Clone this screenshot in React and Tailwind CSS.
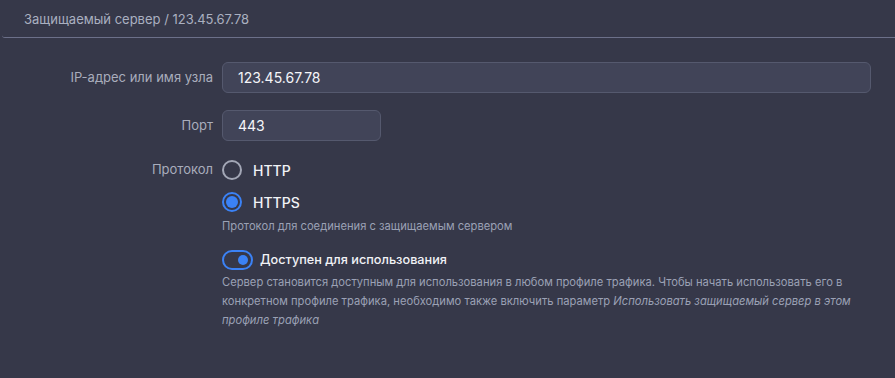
import { useState } from "react";

function Radio({ checked, label, onClick }) {
  return (
    <button type="button" onClick={onClick} className="flex items-center gap-[11px] h-[20px]">
      <span
        className={
          "w-[20px] h-[20px] rounded-full border-2 flex items-center justify-center " +
          (checked ? "border-[#3b82f6]" : "border-[#a3a7b6]")
        }
      >
        {checked && <span className="w-[12px] h-[12px] rounded-full bg-[#3b82f6]" />}
      </span>
      <span className="text-[14px] font-medium text-[#f1f2f6]">{label}</span>
    </button>
  );
}

function App() {
  const [proto, setProto] = useState("https");
  const [enabled, setEnabled] = useState(true);

  return (
    <div className="w-[895px] h-[378px] bg-[#363849] overflow-hidden" style={{ fontFamily: "Inter, 'Noto Sans', sans-serif" }}>
      <div className="h-[38px] pl-[24px] pt-[6px] border-b border-[#6c7089] rounded-bl-[3px] ml-[2px]">
        <span className="-ml-[2px] text-[13px] text-[#aab0c0]">Защищаемый сервер / 123.45.67.78</span>
      </div>

      <div className="grid grid-cols-[213px_1fr] gap-x-[9px] pr-[24px] pt-[24px]">
        <div className="h-[31px] flex items-center justify-end text-[13px] text-[#a9adbc]">IP-адрес или имя узла</div>
        <div className="h-[31px] flex items-center px-[15px] rounded-[6px] bg-[#414458] border border-[#55596e] text-[14px] text-[#f4f5f8]">
          123.45.67.78
        </div>

        <div className="mt-[17px] h-[31px] flex items-center justify-end text-[13px] text-[#a9adbc]">Порт</div>
        <div className="mt-[17px] w-[159px] h-[31px] flex items-center px-[15px] rounded-[6px] bg-[#414458] border border-[#55596e] text-[14px] text-[#f4f5f8]">
          443
        </div>

        <div className="mt-[19px] h-[20px] flex items-center justify-end text-[13px] text-[#a9adbc]">Протокол</div>
        <div className="mt-[19px] flex flex-col items-start">
          <Radio checked={proto === "http"} label="HTTP" onClick={() => setProto("http")} />
          <div className="mt-[12px]">
            <Radio checked={proto === "https"} label="HTTPS" onClick={() => setProto("https")} />
          </div>
          <p className="mt-[6px] text-[11.2px] text-[#9ba1b5]">Протокол для соединения с защищаемым сервером</p>

          <button type="button" onClick={() => setEnabled(!enabled)} className="mt-[15px] flex items-center gap-[7px]">
            <span
              className={
                "w-[31px] h-[20px] rounded-full border-2 flex items-center px-[3px] " +
                (enabled ? "border-[#3b82f6] justify-end" : "border-[#a3a7b6] justify-start")
              }
            >
              <span className={"w-[10px] h-[10px] rounded-full " + (enabled ? "bg-[#3b82f6]" : "bg-[#a3a7b6]")} />
            </span>
            <span className="text-[12.7px] font-medium text-[#f1f2f6]">Доступен для использования</span>
          </button>
          <p className="mt-[3px] text-[11.2px] leading-[19px] text-[#9ba1b5] max-w-[632px]">
            Сервер становится доступным для использования в любом профиле трафика. Чтобы начать использовать его в
            конкретном профиле трафика, необходимо также включить параметр{" "}
            <i>Использовать защищаемый сервер в этом профиле трафика</i>
          </p>
        </div>
      </div>
    </div>
  );
}

export default App;
